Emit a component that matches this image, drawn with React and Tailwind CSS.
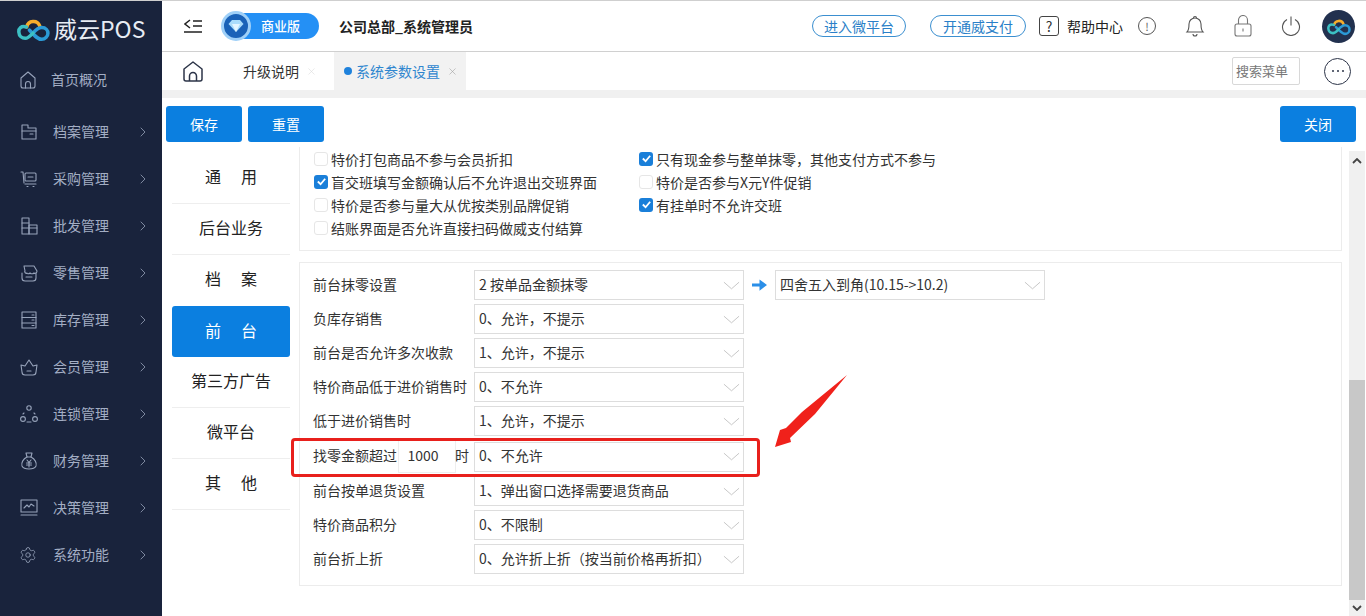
import { Settings, X, ChevronRight } from "lucide-react";

const font = "font-['Noto_Sans_CJK_SC',sans-serif]";

const Ico = ({ children, className = "w-[20px] h-[20px]" }) => (
  <svg viewBox="0 0 20 20" fill="none" stroke="currentColor" strokeWidth="1.1" strokeLinecap="round" strokeLinejoin="round" className={className}>
    {children}
  </svg>
);

const menu = [
  { name: "档案管理", icon: <><path d="M3 3h6v3h8v11H3z" /><path d="M3 9h14M11 12h3" /></> },
  { name: "采购管理", icon: <><path d="M2 3h2l1 11" /><rect x="6" y="4" width="11" height="8" rx="1" /><path d="M9 8h5M6 15h11M8 17.5h1M14 17.5h1" /></> },
  { name: "批发管理", icon: <><rect x="3" y="2" width="7" height="16" /><rect x="10" y="9" width="8" height="9" /><path d="M3 7h7M3 12h15" /></> },
  { name: "零售管理", icon: <><path d="M5 3h10l3 5c0 2-2 3-3 2-1 1-3 1-4 0-1 1-3 1-3 0-1 1-3-1-2-2z" /><path d="M3 10v5a3 3 0 003 3h8a3 3 0 003-3v-5M7 14h6" /></> },
  { name: "库存管理", icon: <><rect x="3" y="2" width="14" height="16" /><path d="M3 7.5h14M3 13h14M13 5h2M13 10h2M13 15.5h2" /></> },
  { name: "会员管理", icon: <><path d="M2 8l4 1 4-6 4 6 4-1-1 7a3 3 0 01-3 3H6a3 3 0 01-3-3z" /><path d="M8 14h4" /></> },
  { name: "连锁管理", icon: <><circle cx="10" cy="4" r="2.2" /><circle cx="4" cy="15" r="2.4" /><circle cx="16" cy="15" r="2.4" /><path d="M8 18h4M5 9l-1 1M15 9l1 1" /></> },
  { name: "财务管理", icon: <><path d="M7 2h6l-1 4H8z" /><path d="M8 6C4 8 2 12 3 15c1 2 3 3 7 3s6-1 7-3c1-3-1-7-5-9" /><path d="M8 9l2 2.5L12 9M7.5 12h5M7.5 14h5M10 11.500V16" /></> },
  { name: "决策管理", icon: <><rect x="2" y="2" width="16" height="12" /><path d="M5 10l3-3 2 2 2-3 3 2M2 17h16" /></> },
  { name: "系统功能", icon: null },
];

const navItems = ["通用", "后台业务", "档案", "前台", "第三方广告", "微平台", "其他"];

const leftChecks = [
  ["特价打包商品不参与会员折扣", false],
  ["盲交班填写金额确认后不允许退出交班界面", true],
  ["特价是否参与量大从优按类别品牌促销", false],
  ["结账界面是否允许直接扫码做威支付结算", false],
];
const rightChecks = [
  ["只有现金参与整单抹零，其他支付方式不参与", true],
  ["特价是否参与X元Y件促销", false],
  ["有挂单时不允许交班", true],
];

const Logo = ({ className }) => (
  <svg viewBox="0 0 32 26" fill="none" strokeWidth="3.4" strokeLinecap="round" className={className}>
    <path d="M9.500 11.500 A6.500 6.500 0 0 1 22 10.500" stroke="#f6ad2b" />
    <path d="M12 14.500 C17 20 20 23.500 24 23.500 C27 23.500 30 21 30 17.500 C30 15 28 12 24 12 C20.500 12 18 14.500 15.500 17.500" stroke="#2b9ad6" />
    <path d="M15.500 17.500 C13 20 11 22.500 8 22.500 C5 22.500 2 20.500 1.800 16.500 C1.500 13 4 10 9 11.500" stroke="#3cc0c4" />
  </svg>
);

const Sidebar = () => (
  <aside className="w-[162px] shrink-0 bg-[#19233c] flex flex-col">
    <div className="h-[55px] flex items-center pl-[17px] gap-[4px]">
      <Logo className="w-[33px] h-[27px]" />
      <span className="text-[23px] leading-none text-[#e8ecf3]">威云POS</span>
    </div>
    <div className="h-[47px] flex items-center pl-[18px] gap-[23px] text-[#a3aec4] text-[14px]">
      <span className="text-[#97a3ba]">
        <Ico className="w-[20px] h-[20px]">
          <path d="M3 8l7-6 7 6v8a2 2 0 01-2 2H5a2 2 0 01-2-2z" />
          <path d="M7.500 18v-4a2.500 2.500 0 015 0v4" />
        </Ico>
      </span>
      <span className="-ml-[10px]">首页概况</span>
    </div>
    <div className="mt-[5px] flex flex-col">
      {menu.map((m) => (
        <div key={m.name} className="h-[47px] flex items-center pl-[19px] pr-[11px] text-[14px] text-[#a3aec4]">
          <span className="w-[34px] text-[#97a3ba]">
            {m.icon ? <Ico>{m.icon}</Ico> : <Settings className="w-[18px] h-[18px]" strokeWidth={1.1} />}
          </span>
          <span className="flex-1">{m.name}</span>
          <ChevronRight className="w-[16px] h-[16px] text-[#a3aec4]" strokeWidth={1.1} />
        </div>
      ))}
    </div>
  </aside>
);

const Header = () => (
  <header className="h-[51px] shrink-0 border-b border-[#d0d0d0] flex items-center bg-white">
    <svg viewBox="0 0 18 14" fill="none" stroke="#222" strokeWidth="1.5" className="ml-[22px] w-[18px] h-[14px]">
      <path d="M6 1L1 5l5 4M9 2h9M9 7h9M0 13h18" />
    </svg>
    <div className="ml-[20px] h-[26px] w-[97px] rounded-full bg-[#2490f5] flex items-center relative">
      <span className="absolute -left-[1px] -top-[2px] w-[30px] h-[30px] rounded-full bg-[#1a62b8] border-[3px] border-[#9fd0f8] flex items-center justify-center">
        <svg viewBox="0 0 16 14" className="w-[16px] h-[14px]">
          <path d="M4 1h8l3.500 4L8 13 .5 5z" fill="#a9dcfb" />
          <path d="M4 5h8l-4 8z" fill="#e3f5ff" />
        </svg>
      </span>
      <span className="ml-[39px] text-[13px] font-medium text-white">商业版</span>
    </div>
    <span className="ml-[20px] text-[14px] font-bold text-[#222]">公司总部_系统管理员</span>
    <div className="ml-auto flex items-center">
      <span className="w-[94px] h-[22px] rounded-full border border-[#3b8fd0] text-[#2a7fc8] text-[14px] flex items-center justify-center">进入微平台</span>
      <span className="ml-[24px] w-[96px] h-[22px] rounded-full border border-[#3b8fd0] text-[#2a7fc8] text-[14px] flex items-center justify-center">开通威支付</span>
      <span className="ml-[13px] w-[20px] h-[20px] rounded-[3px] border border-[#444] text-[#333] text-[14px] leading-none flex items-center justify-center">?</span>
      <span className="ml-[8px] text-[14px] text-[#222]">帮助中心</span>
      <span className="ml-[15px] w-[18px] h-[18px] rounded-full border border-[#555] text-[#666] text-[11px] leading-none flex items-center justify-center">!</span>
      <span className="ml-[29px] text-[#555]">
        <svg viewBox="0 0 20 22" fill="none" stroke="currentColor" strokeWidth="1.1" className="w-[20px] h-[22px]">
          <path d="M2 17c2-2 2-4 2-8a6 6 0 0112 0c0 4 0 6 2 8z" />
          <path d="M8.500 3a1.500 1.500 0 013 0M8 19a2 2 0 004 0" />
        </svg>
      </span>
      <span className="ml-[29px] text-[#777]">
        <svg viewBox="0 0 18 22" fill="none" stroke="currentColor" strokeWidth="1.1" className="w-[18px] h-[22px]">
          <rect x="1" y="9" width="16" height="12" rx="2" />
          <path d="M4.500 9V5a4.500 4.500 0 019 0v4M9 13.500v3" />
        </svg>
      </span>
      <span className="ml-[29px] text-[#555]">
        <svg viewBox="0 0 20 20" fill="none" stroke="currentColor" strokeWidth="1.1" className="w-[20px] h-[20px]">
          <path d="M6 3.500a8.500 8.500 0 108 0M10 .5v9" />
        </svg>
      </span>
      <span className="ml-[21px] mr-[11px] w-[33px] h-[33px] rounded-full bg-[#22314f] flex items-center justify-center">
        <Logo className="w-[24px] h-[20px]" />
      </span>
    </div>
  </header>
);

const Tabs = () => (
  <div className="h-[38px] shrink-0 flex items-center bg-white">
    <svg viewBox="0 0 22 22" fill="none" stroke="#2c3448" strokeWidth="1.5" strokeLinejoin="round" className="ml-[20px] w-[22px] h-[22px]">
      <path d="M2 9l9-7 9 7v10a2 2 0 01-2 2H4a2 2 0 01-2-2z" />
      <path d="M7.500 21v-5a3.500 3.500 0 017 0v5" />
    </svg>
    <span className="ml-[39px] text-[14px] text-[#333]">升级说明</span>
    <X className="ml-[7px] w-[11px] h-[11px] text-[#d8d8d8]" strokeWidth={1.2} />
    <div className="ml-[17px] w-[132px] h-full bg-[#f2f2f2] flex items-center pl-[10px]">
      <span className="w-[8px] h-[8px] rounded-full bg-[#1f82dc]" />
      <span className="ml-[4px] text-[14px] text-[#2f86cf]">系统参数设置</span>
      <X className="ml-[7px] w-[11px] h-[11px] text-[#9a9a9a]" strokeWidth={1.2} />
    </div>
    <div className="ml-auto w-[68px] h-[28px] border border-[#d8d8d8] rounded-[2px] text-[13px] text-[#777] flex items-center pl-[3px]">搜索菜单</div>
    <span className="ml-[24px] mr-[15px] w-[27px] h-[27px] rounded-full border border-[#2c3448] text-[#2c3448] flex items-center justify-center gap-[3px]">
      <i className="w-[2px] h-[2px] bg-[#2c3448] rounded-full" />
      <i className="w-[2px] h-[2px] bg-[#2c3448] rounded-full" />
      <i className="w-[2px] h-[2px] bg-[#2c3448] rounded-full" />
    </span>
  </div>
);

const Btn = ({ children }) => (
  <button className="w-[76px] h-[36px] rounded-[3px] bg-[#0b7fe0] text-white text-[14px]">{children}</button>
);

const SideTabs = () => (
  <nav className="w-[118px] shrink-0 ml-[10px] pt-[2px] flex flex-col">
    {navItems.map((n) =>
      n === "前台" ? (
        <div key={n} className="h-[51px] pb-[3px] rounded-[3px] bg-[#0b7fe0] text-white text-[16px] flex items-center justify-center gap-[20px]">
          <span>前</span>
          <span>台</span>
        </div>
      ) : (
        <div
          key={n}
          className={`h-[51px] pb-[5px] text-[16px] text-[#222] flex items-center justify-center gap-[20px] ${n === "档案" ? "" : "border-b border-[#eeeeee]"}`}
        >
          {n.length === 2 ? (
            <>
              <span>{n[0]}</span>
              <span>{n[1]}</span>
            </>
          ) : (
            <span>{n}</span>
          )}
        </div>
      )
    )}
  </nav>
);

const Check = ({ label, on }) => (
  <div className="h-[23px] flex items-center gap-[3px] text-[14px] leading-[14px] text-[#333] whitespace-nowrap">
    {on ? (
      <span className="w-[14px] h-[14px] rounded-[3px] bg-[#1a7fd9] flex items-center justify-center">
        <svg viewBox="0 0 12 12" fill="none" stroke="#fff" strokeWidth="2" className="w-[11px] h-[11px]">
          <path d="M2 6l3 3 5-6" />
        </svg>
      </span>
    ) : (
      <span className="w-[14px] h-[14px] rounded-[3px] border border-[#e6e6e6] bg-white" />
    )}
    <span>{label}</span>
  </div>
);

const Select = ({ value, w = "w-[270px]", h = "h-[30px]" }) => (
  <div className={`${w} ${h} border border-[#dddddd] flex items-center pl-[4px] pr-[2px] text-[14px] text-[#333] bg-white`}>
    <span className="flex-1 whitespace-nowrap pb-[2px]">{value}</span>
    <svg viewBox="0 0 18 9" fill="none" stroke="#c4c4c4" strokeWidth="1" className="w-[17px] h-[9px] mr-[1px]">
      <path d="M1 1l8 7 8-7" />
    </svg>
  </div>
);

const rows = [
  ["前台抹零设置", "2 按单品金额抹零"],
  ["负库存销售", "0、允许，不提示"],
  ["前台是否允许多次收款", "1、允许，不提示"],
  ["特价商品低于进价销售时", "0、不允许"],
  ["低于进价销售时", "1、允许，不提示"],
  [null, "0、不允许"],
  ["前台按单退货设置", "1、弹出窗口选择需要退货商品"],
  ["特价商品积分", "0、不限制"],
  ["前台折上折", "0、允许折上折（按当前价格再折扣）"],
];

const Scrollbar = () => (
  <div className="w-[16px] shrink-0 ml-[7px] bg-[#f0f0f0] flex flex-col items-center">
    <svg viewBox="0 0 10 6" fill="none" stroke="#444" strokeWidth="1.800" className="mt-[7px] w-[10px] h-[6px]">
      <path d="M1 5l4-4 4 4" />
    </svg>
    <div className="mt-auto w-full h-[220px] bg-[#c8c8c8]" />
    <div className="h-[16px] flex items-center">
      <svg viewBox="0 0 10 6" fill="none" stroke="#444" strokeWidth="1.800" className="w-[10px] h-[6px]">
        <path d="M1 1l4 4 4-4" />
      </svg>
    </div>
  </div>
);

const Panels = () => (
  <div className="flex-1 min-w-0 ml-[9px] pt-[1px]">
    <div className="-mt-[5px] h-[104px] border border-t-0 border-[#ececec] pl-[14px] flex">
      <div className="w-[325px]">
        {leftChecks.map(([l, on]) => (
          <Check key={l} label={l} on={on} />
        ))}
      </div>
      <div>
        {rightChecks.map(([l, on]) => (
          <Check key={l} label={l} on={on} />
        ))}
      </div>
    </div>
    <div className="mt-[11px] h-[324px] border border-[#ececec] pl-[13px] pt-[7px] flex flex-col gap-[4px]">
      {rows.map(([label, value], i) => (
        <div key={value + i} className={`flex items-center text-[14px] text-[#333] ${i === 5 ? "mt-[1px] h-[31px]" : "h-[30px]"}`}>
          {label ? (
            <span className="w-[161px] whitespace-nowrap pb-[2px]">{label}</span>
          ) : (
            <span className="w-[161px] flex items-center whitespace-nowrap">
              <span className="pb-[2px]">找零金额超过</span>
              <span className="ml-[1px] w-[58px] h-[33px] pb-[2px] pr-[8px] border border-[#eeeeee] flex items-center justify-center">1000</span>
              <span className="pb-[2px] -ml-[1px]">时</span>
            </span>
          )}
          <Select value={value} />
          {i === 0 && (
            <>
              <svg viewBox="0 0 16 14" className="mx-[8px] w-[15px] h-[14px]" fill="#2b8fe8">
                <path d="M0 5.500h8V1l8 6-8 6V8.500H0z" />
              </svg>
              <Select value="四舍五入到角(10.15->10.2)" />
            </>
          )}
        </div>
      ))}
    </div>
  </div>
);

export default function App() {
  return (
    <div className={`w-[1366px] h-[616px] overflow-hidden flex flex-col border-t border-[#cfcfcf] bg-white relative ${font}`}>
      <div className="flex-1 flex min-h-0">
        <Sidebar />
        <div className="flex-1 min-w-0 flex flex-col">
          <Header />
          <Tabs />
          <div className="h-[8px] shrink-0 bg-[#f0f0f0]" />
          <div className="h-[53px] shrink-0 flex pt-[8px] pl-[4px] pr-[10px] gap-[6px]">
            <Btn>保存</Btn>
            <Btn>重置</Btn>
            <div className="ml-auto">
              <Btn>关闭</Btn>
            </div>
          </div>
          <div className="flex-1 min-h-0 flex">
            <SideTabs />
            <Panels />
            <Scrollbar />
            <div className="w-[1px] shrink-0" />
          </div>
        </div>
      </div>
      <div className="absolute left-[291px] top-[437px] w-[469px] h-[39px] border-[3px] border-[#e8201c] rounded-[4px]" />
      <svg viewBox="0 0 90 90" className="absolute left-[765px] top-[365px] w-[90px] h-[90px]">
        <path d="M82 9L37 46 21 62 15 64 10 81 26 76 25 72 50 48z" fill="#f0211b" />
      </svg>
    </div>
  );
}
